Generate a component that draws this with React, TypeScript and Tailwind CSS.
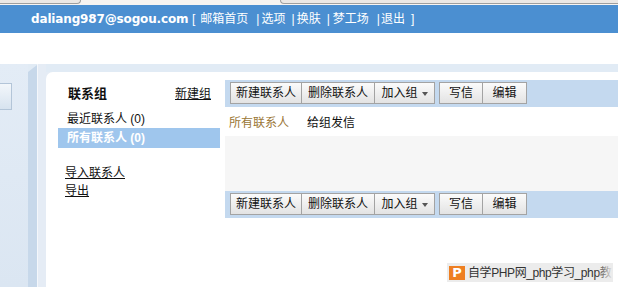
import React from 'react';

const cjk = "font-['Liberation_Sans','Noto_Sans_CJK_SC',sans-serif]";

function Btn({ children, w, join }: { children: React.ReactNode; w: string; join?: boolean }) {
  return (
    <button
      className={`${w} ${join ? '-ml-px' : ''} h-[22px] flex items-center justify-center border border-[#a3a3a3] bg-linear-to-b from-[#fbfbfb] to-[#e3e3e3] text-[12px] leading-none text-[#111]`}
    >
      {children}
    </button>
  );
}

function Toolbar() {
  return (
    <div className="h-[27px] bg-[#c4d9ef] flex items-start pt-[2px] pl-[5px]">
      <Btn w="w-[72px]">新建联系人</Btn>
      <Btn w="w-[74px]" join>
        删除联系人
      </Btn>
      <Btn w="w-[61px]" join>
        <span>加入组</span>
        <span className="ml-[4px] mt-[1px] w-0 h-0 border-l-[3.5px] border-r-[3.5px] border-t-[4px] border-l-transparent border-r-transparent border-t-[#555]" />
      </Btn>
      <div className="w-[4px]" />
      <Btn w="w-[44px]">写信</Btn>
      <Btn w="w-[45px]" join>
        编辑
      </Btn>
    </div>
  );
}

export default function App() {
  return (
    <div className={`w-[618px] h-[287px] overflow-hidden bg-white relative ${cjk}`}>
      {/* browser-ish strip */}
      <div className="h-[5px] bg-[#f7f4f1] flex">
        <div className="w-[81px] h-[4px] bg-[#ebe8e5] border-b border-r border-[#9f9f9f] rounded-br-[4px]" />
        <div className="w-[199px]" />
        <div className="flex-1 h-[4px] bg-[#ebe8e5] border-b border-l border-[#9f9f9f] rounded-bl-[4px]" />
      </div>

      {/* header */}
      <div className="h-[28px] bg-[#4b8fd1] flex items-center pl-[31px] text-white text-[12px] whitespace-nowrap">
        <span className="w-[157px] font-['DejaVu_Sans',sans-serif] font-bold tracking-[-0.15px]">daliang987@sogou.com</span>
        <span className="ml-[4px]">[</span>
        <span className="ml-[5px]">邮箱首页</span>
        <span className="ml-[8px] mr-[2px]">|</span>
        <span>选项</span>
        <span className="ml-[6px] mr-[2px]">|</span>
        <span>换肤</span>
        <span className="ml-[6px] mr-[3px]">|</span>
        <span>梦工场</span>
        <span className="ml-[8px] mr-[1px]">|</span>
        <span>退出</span>
        <span className="ml-[6px]">]</span>
      </div>

      <div className="h-[31px]" />

      {/* body */}
      <div className="h-[223px] flex">
        <div className="w-[28px] bg-linear-to-b from-[#e3ecf6] to-[#dbe6f2] pt-[19px]">
          <div className="w-[12px] h-[27px] border border-l-0 border-[#b3c5d8] bg-linear-to-b from-[#f3f7fb] to-[#d7e3ef]" />
        </div>
        <div className="w-[9px] bg-[#e1ebf5]">
          <div className="h-full bg-[#c7d8ea] [clip-path:polygon(0_8px,100%_1px,100%_100%,0_100%)]" />
        </div>
        <div className="w-[1px] bg-[#f4f7fb]" />
        <div className="w-[8px] bg-[#e5ecf5]" />

        <div className="flex-1 flex flex-col bg-[#e5ecf5]">
          <div className="h-[8px] bg-[#e1ebf5]" />
          <div className="flex-1 bg-white rounded-tl-[7px] flex">
            {/* sidebar */}
            <div className="w-[179px] pl-[12px] pr-[5px] pt-[12px] text-[12px] text-[#111]">
              <div className="h-[19px] flex items-center justify-between pl-[10px] pr-[9px]">
                <span className="font-bold text-[13px]">联系组</span>
                <span className="underline">新建组</span>
              </div>
              <div className="mt-[6px] h-[19px] flex items-center pl-[9px]">最近联系人 (0)</div>
              <div className="h-[20px] flex items-center pl-[9px] bg-[#9fc6ed] text-white font-bold">
                所有联系人 (0)
              </div>
              <div className="mt-[16px] h-[18px] flex items-center pl-[7px] underline">导入联系人</div>
              <div className="h-[18px] flex items-center pl-[7px] underline">导出</div>
            </div>

            {/* content */}
            <div className="flex-1 pt-[8px]">
              <Toolbar />
              <div className="h-[29px] flex items-center pt-[2px] pl-[4px] text-[12px]">
                <span className="text-[#9a7636]">所有联系人</span>
                <span className="ml-[18px] text-[#111]">给组发信</span>
              </div>
              <div className="h-[55px] bg-[#f6f6f6]" />
              <Toolbar />
            </div>
          </div>
        </div>
      </div>

      {/* watermark */}
      <div className="absolute left-[447px] top-[263px] w-[166px] h-[19px] bg-[#ececec] flex items-center pl-[2px] overflow-hidden">
        <span className="w-[16px] h-[14px] shrink-0 bg-[#ee7f22] text-white font-['DejaVu_Sans',sans-serif] font-bold text-[13px] leading-none flex items-center justify-center">
          P
        </span>
        <span className="ml-[3px] text-[12px] text-[#333] whitespace-nowrap tracking-[-0.4px]">自学PHP网_php学习_php教</span>
        <div className="absolute right-0 top-0 h-full w-[16px] bg-linear-to-r from-transparent to-[#ececec]" />
      </div>
    </div>
  );
}
